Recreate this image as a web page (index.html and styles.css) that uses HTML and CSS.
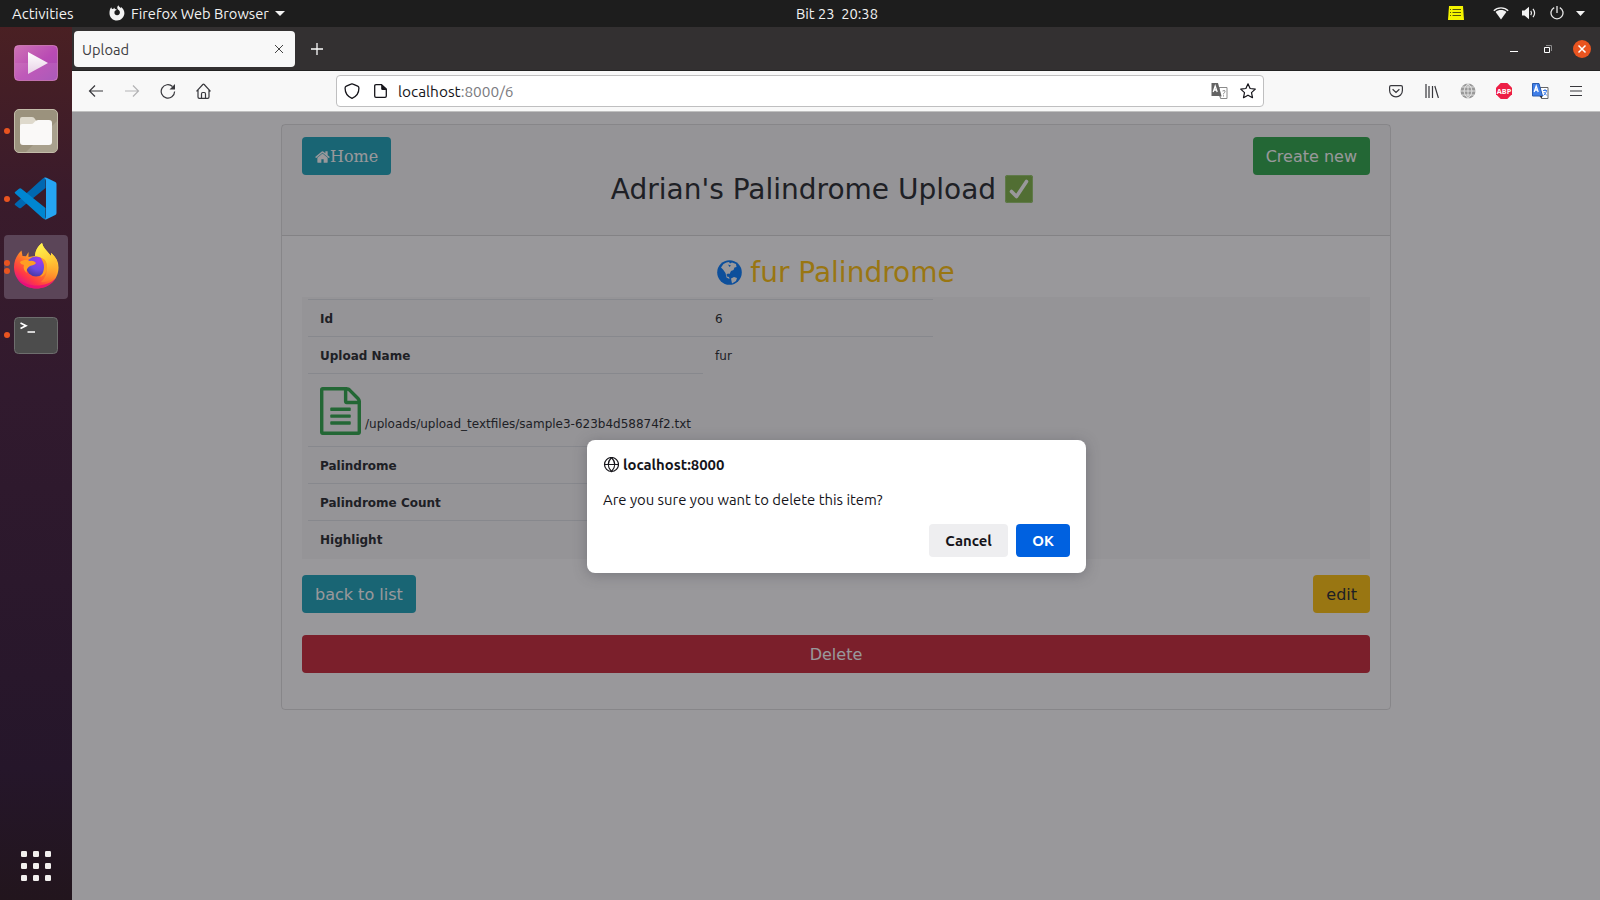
FILE: index.html
```html
<!DOCTYPE html>
<html lang="en">
<head>
<meta charset="utf-8">
<title>Upload</title>
<link rel="stylesheet" href="styles.css">
</head>
<body>
<header class="topbar">
  <span class="activities">Activities</span>
  <div class="app-menu">
    <svg width="16" height="16" viewBox="0 0 16 16"><path fill="#f2f2f2" fill-rule="evenodd" d="M2.200 2.200 3 4l1.600-.3L5 2.400l1 1.500 1.800.5C6.800 5.500 5.800 5.400 5.500 6.700c-.5 2 .8 3.600 2.600 3.600 1.900 0 3-1.500 2.800-3.200C10.700 5.500 9.300 4.900 8.600 4 8 3 8.200 1.500 9.300.3c.3 1.300 1.600 1.900 2.700 2.700l.1-1c2 1.500 3.400 3.700 3.300 6.300-.2 4-3.300 7.200-7.400 7.200S.6 12.400.5 8.400C.4 6 1 3.800 2.200 2.200z"/></svg>
    <span class="app-name">Firefox Web Browser</span>
    <svg width="10" height="5" viewBox="0 0 10 5"><path fill="#f2f2f2" d="M0 0h10L5 5z"/></svg>
  </div>
  <span class="clock">Bit 23&nbsp; 20:38</span>
  <div class="status">
    <svg width="16" height="14" viewBox="0 0 16 14"><path fill="#f4f400" d="M1 0h14l1 14H0z"/><path stroke="#55550a" d="M2 3.500h1M4.500 3.500H13M2 6.500h1M4.500 6.500H13M2 9.500h1M4.500 9.500H13"/></svg>
    <svg class="wifi" width="16" height="13" viewBox="0 0 16 13"><path fill="#f2f2f2" d="M2.600 5C5.500 2.400 10.500 2.400 13.400 5L8 12.500z"/><path fill="none" stroke="#f2f2f2" stroke-width="1.300" d="M.8 3.700C4.500 0 11.500 0 15.200 3.700"/></svg>
    <svg class="volume" width="15" height="14" viewBox="0 0 15 14"><path fill="#f2f2f2" d="M0 4.500h2.500L7 .8v12.400L2.500 9.500H0z"/><path fill="none" stroke="#f2f2f2" stroke-width="1.200" d="M8.800 4.800q1.500 2.200 0 4.400M11 2.800q3.200 4.200 0 8.400"/></svg>
    <svg class="power" width="14" height="14" viewBox="0 0 14 14"><path fill="none" stroke="#e8e8e8" stroke-width="1.300" d="M4.200 1.600a6 6 0 1 0 5.600 0M7 0v7"/></svg>
    <svg class="caret" width="9" height="5" viewBox="0 0 9 5"><path fill="#f2f2f2" d="M0 0h9L4.500 5z"/></svg>
  </div>
</header>

<div class="desktop">
  <nav class="dock">
    <div class="slot">
      <svg width="44" height="38" viewBox="0 0 44 38"><defs><linearGradient id="vid" x1="0" y1="0" x2="1" y2="1"><stop offset="0" stop-color="#ce74b5"/><stop offset=".55" stop-color="#b94bb4"/><stop offset="1" stop-color="#a34db5"/></linearGradient><linearGradient id="tri" x1="0" y1="0" x2="0" y2="1"><stop offset="0" stop-color="#fff"/><stop offset="1" stop-color="#e8d0e6"/></linearGradient></defs><rect x=".5" y="1.500" width="43" height="35" rx="4" fill="url(#vid)" stroke="#e08acb" stroke-opacity=".7"/><path fill="#fff" fill-opacity=".08" d="M1 19h42v14q0 3-3 3H4q-3 0-3-3z"/><path fill="url(#tri)" d="M14 8v22l20-11z"/></svg>
    </div>
    <div class="slot">
      <i class="run"></i>
      <svg width="44" height="44" viewBox="0 0 44 44"><rect x=".5" y=".5" width="43" height="43" rx="4.500" fill="#9b927d" stroke="#c3bca9"/><path fill="#b3ac9a" fill-opacity=".6" d="M43 12v27q0 4-4 4H12z"/><path fill="#ded9cc" d="M6 17v-7q0-2 2-2h10q2 0 3 2l2 3h10v4z"/><path fill="#faf9f8" d="M6 17q0-2 2-2h9q2 0 3-1.500l1-1q1-1.500 3-1.500h11q3 0 3 3v19q0 3-3 3H9q-3 0-3-3z"/></svg>
    </div>
    <div class="slot">
      <i class="run"></i>
      <svg class="code" width="43" height="43" viewBox="0 0 43 43"><path fill="#0068b1" d="m1 28 4 3q1.200.7 2.300-.2L31.500 11V.8Q29.800.5 28.500 1.800L1.200 26.500q-1 .8-.2 1.500z"/><path fill="#0086d1" d="m1 15 4-3.300q1.200-.8 2.400.1L31.500 31v11q-1.600.3-3-1L1.200 16.500Q.2 15.700 1 15z"/><path fill="#25a5f3" d="M30.500 42.500c1-.8 1.500-1.800 1.500-3V4c0-1.300-.6-2.500-2-3.300q1.200-.6 2.500 0l8.800 4.200q1.200.6 1.200 2v29q0 1.500-1.200 2.100L32.500 42.300q-1 .5-2 .2z"/></svg>
    </div>
    <div class="slot">
      <div class="tile">
      <svg class="fox" width="46" height="47" viewBox="0 0 46 47"><defs><linearGradient id="ff" x1=".85" y1=".1" x2=".25" y2=".95"><stop offset="0" stop-color="#fff44f"/><stop offset=".35" stop-color="#ffb02a"/><stop offset=".6" stop-color="#ff6b2d"/><stop offset=".82" stop-color="#ff3647"/><stop offset="1" stop-color="#e31587"/></linearGradient><linearGradient id="tail" x1=".3" y1="0" x2=".6" y2="1"><stop offset="0" stop-color="#fff44f"/><stop offset=".5" stop-color="#ffcb35"/><stop offset="1" stop-color="#ff8a2a" stop-opacity=".3"/></linearGradient><radialGradient id="orb" cx=".65" cy=".2" r=".8"><stop offset="0" stop-color="#a238f0"/><stop offset=".6" stop-color="#6a4be0"/><stop offset="1" stop-color="#4b3aa8"/></radialGradient></defs>
      <path fill="url(#ff)" d="M8.500 8.500 9.500 14l3.500.3L15.500 10v5L22 14c.3-5.500 3-10 7-13 1 4.500 4 7 6.500 10l2.500 3V11c5 4 7.500 8.500 7.500 14.500C45.500 37.500 36 46.500 23.500 46.500S1 37.500 1 25C1 18.500 4 12.500 8.500 8.500z"/>
      <path fill="url(#tail)" d="M22 14c.3-5.500 3-10 7-13 1 4.500 4 7 6.500 10l2.500 3V11c5 4 7.500 8.500 6.500 15.500C42 38 33 41 28 40c7-6 8-17 3-22-3-3-6-4-9-4z"/>
      <path fill="#e80d78" fill-opacity=".8" d="M4 36c9 9 28 11 39 0-4 6.500-11 10.500-19.500 10.500S7.500 42.500 4 36z"/>
      <circle cx="23" cy="24.500" r="10" fill="url(#orb)"/><path fill="#ff9e23" d="M7 20c4-3 8-2 10-1 3-1 5 1 6 2-1 2-4 2-6 3-3 2-4 4-3 7-3-2-4-5-3-8-2-.5-4-1.500-4-3zM28 16c5 1 6 5 6 9 0 5-3 9-7 10 4-4 5-11 3-15z"/></svg>
      </div>
      <i class="run run-a"></i><i class="run run-b"></i>
    </div>
    <div class="slot">
      <i class="run"></i>
      <svg width="44" height="37" viewBox="0 0 44 37"><rect x=".5" y=".5" width="43" height="36" rx="4" fill="#4c4c4c" stroke="#6e6e6e"/><path fill="none" stroke="#fff" stroke-width="1.700" d="M6.500 6 12 8.700 6.500 11.500M13.500 15H21"/></svg>
    </div>
    <svg class="grid-button" width="30" height="30" viewBox="0 0 30 30" fill="#f2f0ef"><rect width="6" height="6" rx="1.300"/><rect x="12" width="6" height="6" rx="1.300"/><rect x="24" width="6" height="6" rx="1.300"/><rect y="12" width="6" height="6" rx="1.300"/><rect x="12" y="12" width="6" height="6" rx="1.300"/><rect x="24" y="12" width="6" height="6" rx="1.300"/><rect y="24" width="6" height="6" rx="1.300"/><rect x="12" y="24" width="6" height="6" rx="1.300"/><rect x="24" y="24" width="6" height="6" rx="1.300"/></svg>
  </nav>

  <div class="browser">
    <div class="tabs">
      <div class="tab"><span class="tab-title">Upload</span>
        <svg width="8" height="8" viewBox="0 0 8 8"><path stroke="#444" d="m0 0 8 8M8 0 0 8"/></svg>
      </div>
      <svg class="plus" width="12" height="12" viewBox="0 0 12 12"><path stroke="#fbfbfb" stroke-width="1.300" d="M6 0v12M0 6h12"/></svg>
      <div class="window-buttons">
        <svg width="8" height="8" viewBox="0 0 8 8"><path fill="#fff" d="M0 6h8v1H0z"/></svg>
        <svg width="8" height="8" viewBox="0 0 8 8"><path fill="none" stroke="#fff" d="M.5 2.500h5v5h-5z"/><path fill="none" stroke="#8b8a8b" d="M2 .5h5.500V6"/></svg>
        <svg width="18" height="18" viewBox="0 0 18 18"><circle cx="9" cy="9" r="9" fill="#e95420"/><path stroke="#fff" stroke-width="1.500" d="m5.500 5.500 7 7m0-7-7 7"/></svg>
      </div>
    </div>
    <div class="toolbar">
      <div class="icons">
        <span><svg width="16" height="16" viewBox="0 0 16 16" fill="none" stroke="#38383d" stroke-width="1.200"><path d="M15 8H1.500M7 2.500 1.500 8 7 13.500"/></svg></span>
        <span><svg width="16" height="16" viewBox="0 0 16 16" fill="none" stroke="#b3b3b5" stroke-width="1.200"><path d="M1 8h13.500M9 2.500 14.500 8 9 13.500"/></svg></span>
        <span><svg width="16" height="16" viewBox="0 0 16 16" fill="none" stroke="#38383d" stroke-width="1.200"><path d="M14.600 8.500A6.700 6.700 0 1 1 12.500 3.500"/><path fill="#38383d" stroke="none" d="M15 1v5.500H9.500z"/></svg></span>
        <span><svg width="16" height="16" viewBox="0.500 0 16 16" fill="none" stroke="#38383d" stroke-width="1.200"><path d="M1 8.300 7.300 1.500q.7-.7 1.400 0L15 8.300M2.500 7v7q0 1.300 1.300 1.300h8.400q1.300 0 1.300-1.300V7M6 15v-4q0-1.500 1.200-1.500h1.600q1.200 0 1.200 1.500v4"/></svg></span>
      </div>
      <div class="urlbar">
        <svg width="16" height="16" viewBox="0 0 16 16" fill="none" stroke="#15141a" stroke-width="1.300"><path d="M8 .8q.5 0 1 .3l4.700 2q1.200.5 1.200 1.800C15 9.500 12.500 13.500 8 15.300 3.500 13.500 1 9.500 1.100 4.900q0-1.300 1.200-1.800l4.700-2q.5-.3 1-.3z"/></svg>
        <svg class="doc" width="13" height="14" viewBox="0 0 13 14" fill="none" stroke="#15141a" stroke-width="1.300"><path d="M7.500.7H2Q.7.700.7 2v10q0 1.300 1.300 1.300h9q1.300 0 1.300-1.300V5z"/><path fill="#15141a" stroke="none" d="M7.200.5 12.700 6H8.500Q7.200 6 7.200 4.700z"/></svg>
        <span class="url"><b>localhost</b>:8000/6</span>
        <svg class="translate" width="17" height="16" viewBox="0 0 17 16"><path fill="#fff" stroke="#8a8a8a" d="M8 4.500h8v11H9.500z"/><path fill="#636363" d="M.5 0H7l3.500 13H.5z"/><path fill="#9a9a9a" d="m8 13 2.500 0-1 2.500z"/><path fill="none" stroke="#fff" stroke-width="1.300" d="m2.200 9 2-6 2 6M3 7h2.600"/><path fill="none" stroke="#8a8a8a" d="M11.500 8q3-1.500 2.500.8c-.5 1.500-1.500.8-1.500 2.500m0 1v1.200"/></svg>
        <svg width="16" height="16" viewBox="0 0 16 16"><path fill="none" stroke="#15141a" stroke-width="1.200" stroke-linejoin="round" d="m8 .8 2.100 4.700 5.200.6-3.800 3.500 1 5.100L8 12.200l-4.500 2.500 1-5.100L.7 6.100l5.200-.6z"/></svg>
      </div>
      <div class="icons icons-right">
        <span><svg width="14" height="14" viewBox="0 0 14 14" fill="none" stroke="#38383d" stroke-width="1.200"><path d="M2 1.600h10q1.400 0 1.400 1.400v3.500a6.400 6.400 0 0 1-12.800 0V3Q.6 1.600 2 1.600zM3.600 5.300 7 8.500l3.400-3.200"/></svg></span>
        <span><svg width="14" height="14" viewBox="0 0 14 14" fill="none" stroke="#38383d" stroke-width="1.200"><path d="M1 0v14M4 2v12M7.500 2v12M9.800 2l3.600 12"/></svg></span>
        <span><svg width="16" height="16" viewBox="0 0 16 16"><circle cx="8" cy="8" r="7.500" fill="#999"/><path fill="none" stroke="#f0f0f0" stroke-width=".8" d="M8 0v16M0 8h16M2 4h12M2 12h12M8 .5q-8 7.500 0 15 8-7.500 0-15"/></svg></span>
        <span><svg width="16" height="16" viewBox="0 0 16 16"><path fill="#ed1e45" d="M4.700 0h6.600L16 4.700v6.600L11.300 16H4.700L0 11.300V4.700z"/><text class="abp" x="8" y="11" text-anchor="middle" textLength="14.500" lengthAdjust="spacingAndGlyphs">ABP</text></svg></span>
        <span><svg width="17" height="16" viewBox="0 0 17 16"><path fill="#fff" stroke="#666" d="M8 4.500h8v11H9.500z"/><path fill="#3f7ee8" stroke="#2a5cb0" d="M.5.500H7L10.500 13H.5z"/><path fill="#333" d="M7.500 13h3l-1 2.500z"/><path fill="none" stroke="#fff" stroke-width="1.300" d="m2.200 9 2-6 2 6M3 7h2.600"/><path fill="none" stroke="#3f7ee8" d="M11 7.500h4M13 6v1.500M14.500 8q-.8 3-3 4.500M11.800 9l3 3.500"/></svg></span>
        <span><svg width="12" height="12" viewBox="0 0 12 12"><path stroke="#38383d" stroke-width="1.200" d="M0 1.500h12M0 6h12M0 10.500h12"/></svg></span>
      </div>
    </div>

    <div class="viewport">
      <div class="card">
        <div class="card-header">
          <a class="btn info home"><svg width="15" height="16" viewBox="60 0 1672 1792"><path fill="#fff" d="M1472 992v480q0 26-19 45t-45 19h-384v-384h-256v384h-384q-26 0-45-19t-19-45v-480q0-1 .5-3t.5-3l575-474 575 474q1 2 1 6zm223-69l-62 74q-8 9-21 11h-3q-13 0-21-7l-692-577-692 577q-12 8-24 7-13-2-21-11l-62-74q-8-10-7-23.500t11-21.500l719-599q32-26 76-26t76 26l244 204v-195q0-14 9-23t23-9h192q14 0 23 9t9 23v408l219 182q10 8 11 21.500t-7 23.500z"/></svg>Home</a>
          <h3 class="title">Adrian's Palindrome Upload
            <svg width="28" height="28" viewBox="0 0 28 28"><rect width="28" height="28" rx="2.500" fill="#7cb342"/><rect x=".5" y=".5" width="27" height="27" rx="2" fill="none" stroke="#98c96c"/><path fill="none" stroke="#fff" stroke-width="3.600" stroke-linecap="round" stroke-linejoin="round" d="m6.500 16.500 5 5L21.500 6.500"/></svg>
          </h3>
          <a class="btn success">Create new</a>
        </div>
        <div class="card-body">
          <h3 class="subtitle">
            <svg width="25" height="25" viewBox="0 0 25 25"><circle cx="12.500" cy="12.500" r="12.300" fill="#007bff"/><path fill="#fff" d="M4 7.500 6.500 4l3-1.500L12 2l1 1.500 2-1 4 1.500.5 3-2 .5-1 2.500-2.500 1-1.500 3-1.500-.5-1.500 1 .5 2 2 .5.5 2-3-1.500L8.500 13 6 9.500zM14 18.500l3-1.500 3 1-1 3-4 2.500-.5-2.500z"/><path fill="#007bff" d="m11 4.500 3 1-1.500 1.500z"/></svg>
            <span>fur Palindrome</span>
          </h3>
          <div class="table-wrap">
            <table class="table">
              <tr><th>Id</th><td>6</td></tr>
              <tr><th>Upload Name</th><td>fur</td></tr>
              <tr class="file"><td><svg width="41" height="48" viewBox="128 0 1536 1792"><path fill="#28a745" d="M1596 380q28 28 48 76t20 88v1152q0 40-28 68t-68 28h-1344q-40 0-68-28t-28-68v-1600q0-40 28-68t68-28h896q40 0 88 20t76 48zm-444-244v376h376q-10-29-22-41l-313-313q-12-12-41-22zm384 1528v-1024h-416q-40 0-68-28t-28-68v-416h-768v1536h1280zm-1024-864q0-14 9-23t23-9h704q14 0 23 9t9 23v64q0 14-9 23t-23 9h-704q-14 0-23-9t-9-23v-64zm736 224q14 0 23 9t9 23v64q0 14-9 23t-23 9h-704q-14 0-23-9t-9-23v-64q0-14 9-23t23-9h704zm0 256q14 0 23 9t9 23v64q0 14-9 23t-23 9h-704q-14 0-23-9t-9-23v-64q0-14 9-23t23-9h704z"/></svg><span>/uploads/upload_textfiles/sample3-623b4d58874f2.txt</span></td></tr>
              <tr><th>Palindrome</th><td></td></tr>
              <tr><th>Palindrome Count</th><td></td></tr>
              <tr><th>Highlight</th><td></td></tr>
            </table>
          </div>
          <div class="actions"><a class="btn info">back to list</a><a class="btn warning">edit</a></div>
          <a class="btn danger">Delete</a>
        </div>
      </div>
      <div class="overlay">
        <div class="dialog">
          <div class="dialog-title">
            <svg width="16" height="16" viewBox="0 0 16 16" fill="none" stroke="#15141a" stroke-width="1.200"><circle cx="8.500" cy="7.500" r="7"/><path d="M1.500 7.500h14M8.500.5q-6.500 7 0 14 6.500-7 0-14"/></svg>
            <span>localhost:8000</span>
          </div>
          <p class="message"><span>Are you sure you want to delete this item?</span></p>
          <div class="dialog-buttons"><span class="cancel">Cancel</span><span class="ok">OK</span></div>
        </div>
      </div>
    </div>
  </div>
</div>
</body>
</html>
```

FILE: styles.css
```css
* { box-sizing: border-box; }
body {
  margin: 0;
  width: 1600px;
  height: 900px;
  overflow: hidden;
  display: flex;
  flex-direction: column;
  font-family: Ubuntu, "Noto Sans", sans-serif;
  font-size: 14.67px;
  white-space: nowrap;
}
svg { display: block; flex: none; }

.topbar {
  height: 27px;
  flex: none;
  display: grid;
  grid-template-columns: 107px 689px 1fr auto;
  align-items: center;
  padding: 0 15px 1px 0;
  background: #1d1d1d;
  color: #f2f2f2;
}
.activities { padding-left: 12px; font-size: 15px; }
.app-menu { display: flex; align-items: center; }
.app-menu svg { margin-left: 2px; }
.app-name { margin: 0 4px 0 6px; }
.status { display: flex; align-items: center; }
.status .wifi { margin-left: 29px; }
.status .volume { margin-left: 13px; }
.status .power { margin-left: 13px; }
.status .caret { margin-left: 12px; }

.desktop { display: flex; height: 873px; }
.dock {
  width: 72px;
  flex: none;
  display: flex;
  flex-direction: column;
  align-items: center;
  padding: 2px 0 19px;
  background: linear-gradient(#4a2023 0, #3a1b2b 19%, #311a2e 42%, #25162a 85%, #22151d 100%);
}
.slot {
  position: relative;
  width: 72px;
  height: 68px;
  display: flex;
  align-items: center;
  justify-content: center;
}
.code { margin: 0 1px 1px 0; }
.fox { margin: 0 1px 4px 0; }
.run {
  position: absolute;
  left: 4px;
  top: 31px;
  width: 6px;
  height: 6px;
  border-radius: 50%;
  background: #e95420;
}
.run-a { top: 27px; }
.run-b { top: 35px; }
.tile {
  width: 64px;
  height: 64px;
  border-radius: 4px;
  background: #5b4558;
  display: flex;
  align-items: center;
  justify-content: center;
}
.grid-button { margin-top: auto; }

.browser { width: 1528px; display: flex; flex-direction: column; }
.tabs {
  height: 44px;
  flex: none;
  display: flex;
  align-items: center;
  padding: 0 9px 0 2px;
  background: #333031;
  border-bottom: 1px solid #222;
}
.tab {
  width: 221px;
  height: 36px;
  border-radius: 4px;
  background: #f8f8f8;
  color: #3d3d42;
  display: flex;
  align-items: center;
  justify-content: space-between;
  padding: 0 12px 0 8px;
}
.tab-title { padding-top: 1px; }
.plus { margin-left: 16px; }
.window-buttons { margin-left: auto; display: flex; align-items: center; gap: 26px; }
.window-buttons svg:last-child { margin-left: -5px; }

.toolbar {
  height: 41px;
  flex: none;
  display: flex;
  align-items: center;
  padding: 0 6px;
  background: #f8f8f8;
  border-bottom: 1px solid #c0c0c0;
}
.icons { display: flex; }
.icons span { width: 36px; height: 36px; display: flex; align-items: center; justify-content: center; }
.icons-right { margin-left: auto; }
.abp { font: bold 7.5px "Noto Sans", sans-serif; fill: #fff; }
.urlbar {
  width: 928px;
  height: 32px;
  margin-left: 114px;
  border: 1px solid #bfbfc0;
  border-radius: 4px;
  background: #fff;
  display: flex;
  align-items: center;
  padding: 0 7px;
}
.doc { margin: 0 11px 0 14px; }
.url { color: #7a7a7e; font-size: 15.4px; padding-top: 1px; }
.url b { color: #15141a; font-weight: 400; }
.translate { margin: 0 12px 0 auto; }

.viewport {
  position: relative;
  height: 788px;
  background: #fff;
  padding: 12px 209px 0;
  font-family: "DejaVu Sans", sans-serif;
  font-size: 16px;
  line-height: 24px;
  color: #212529;
}
.card { width: 1110px; height: 586px; border: 1px solid rgba(0,0,0,.125); border-radius: 4px; }
.card-header {
  height: 111px;
  display: flex;
  align-items: flex-start;
  padding: 12px 20px;
  background: rgba(0,0,0,.03);
  border-bottom: 1px solid rgba(0,0,0,.125);
}
.btn { display: block; height: 38px; padding: 8px 13px 6px; border-radius: 4px; color: #fff; }
.info { background: #17a2b8; }
.success { background: #28a745; }
.warning { background: #ffc107; color: #212529; }
.danger { background: #c82333; text-align: center; }
.home { display: flex; align-items: center; font-family: "DejaVu Serif", serif; }
.title {
  flex: 1;
  margin: 36px 0 0;
  display: flex;
  justify-content: center;
  align-items: center;
  gap: 9px;
  font-size: 28px;
  font-weight: 400;
  line-height: 34px;
}
.title svg { margin-bottom: 2px; }
.card-body { padding: 20px; }
.subtitle {
  margin: 0;
  height: 41px;
  display: flex;
  justify-content: center;
  gap: 8px;
  color: #ffc107;
  font-size: 28px;
  font-weight: 400;
  line-height: 34px;
}
.subtitle svg { margin-top: 4px; }
.table-wrap { height: 262px; padding: 2px 6px; background: rgba(0,0,0,.03); }
.table { width: 625px; border-collapse: separate; border-spacing: 0; font-size: 12px; line-height: 12px; }
.table th, .table td { height: 37px; padding: 2px 12px 0; border-top: 1px solid #dee2e6; text-align: left; }
.table th { width: 395px; }
.table .file td { height: 73px; display: flex; align-items: flex-end; gap: 4px; padding: 12px 12px 11px; }
.file span { margin-bottom: 5px; }
.actions { display: flex; justify-content: space-between; margin: 16px 0 22px; }

.overlay {
  position: absolute;
  inset: 0;
  background: rgba(28,27,34,.45);
  padding: 328px 0 0 515px;
}
.dialog {
  width: 499px;
  height: 133px;
  border-radius: 8px;
  background: #fff;
  box-shadow: 0 2px 14px rgba(58,57,68,.35);
  padding: 16px;
  font-family: Ubuntu, "Noto Sans", sans-serif;
  font-size: 14.87px;
  line-height: 18px;
  color: #15141a;
}
.dialog-title { display: flex; align-items: center; gap: 4px; font-weight: 700; }
.message { margin: 17px 0 15px; }
.dialog-buttons { display: flex; justify-content: flex-end; gap: 8px; font-weight: 700; text-align: center; line-height: 34px; }
.cancel { width: 79px; height: 33px; border-radius: 4px; background: #eeeef0; }
.ok { width: 54px; height: 33px; border-radius: 4px; background: #0061e0; color: #fff; }
```
